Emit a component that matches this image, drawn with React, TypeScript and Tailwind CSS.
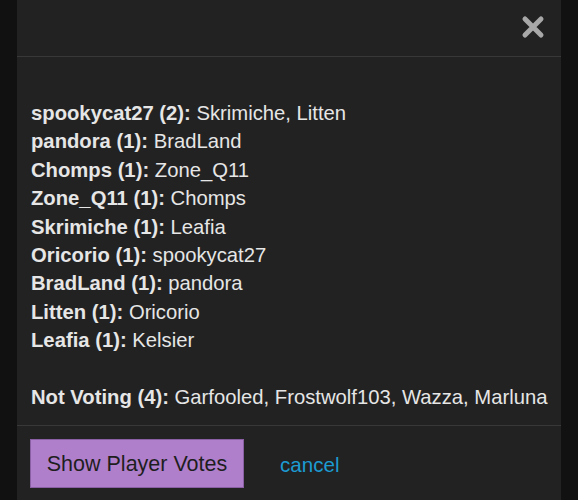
import React from "react";

const rows: [string, string][] = [
  ["spookycat27 (2):", "Skrimiche, Litten"],
  ["pandora (1):", "BradLand"],
  ["Chomps (1):", "Zone_Q11"],
  ["Zone_Q11 (1):", "Chomps"],
  ["Skrimiche (1):", "Leafia"],
  ["Oricorio (1):", "spookycat27"],
  ["BradLand (1):", "pandora"],
  ["Litten (1):", "Oricorio"],
  ["Leafia (1):", "Kelsier"],
];

export default function App() {
  return (
    <div
      className="h-[500px] w-[578px] overflow-hidden bg-[#111111] flex"
      style={{ fontFamily: '"Liberation Sans", Arial, sans-serif' }}
    >
      <div className="ml-[17px] w-[544px] h-full bg-[#222222] flex flex-col">
        <div className="h-[57px] shrink-0 border-b border-[#383838] flex items-center justify-end pr-[16px] pb-[4px]">
          <svg width="24" height="24" viewBox="0 0 24 24" className="mt-[2px]">
            <path
              d="M4 4 L20 20 M20 4 L4 20"
              stroke="#a8a8a8"
              strokeWidth="5"
              strokeLinecap="round"
              fill="none"
            />
          </svg>
        </div>
        <div className="px-[14px] pt-[42px] pb-[14px] text-[20.25px] leading-[28.4px] text-[#e6e6e6]">
          {rows.map(([a, b]) => (
            <div key={a} className="whitespace-nowrap">
              <span className="font-bold">{a}</span> {b}
            </div>
          ))}
          <div className="h-[28.4px]" />
          <div className="whitespace-nowrap">
            <span className="font-bold">Not Voting (4):</span> Garfooled, Frostwolf103, Wazza, Marluna
          </div>
        </div>
        <div className="border-t border-[#383838] flex-1 px-[13px] pt-[13px] flex items-start">
          <button
            className="h-[49px] w-[214px] bg-[#b07fcb] border border-[#8a5fa3] text-[#1e1e1e] text-[21.5px] flex items-center justify-center"
            style={{ fontFamily: '"Liberation Sans", Arial, sans-serif' }}
          >
            Show Player Votes
          </button>
          <span className="ml-[36px] mt-[11px] text-[20.6px] text-[#1c9bd3]">cancel</span>
        </div>
      </div>
    </div>
  );
}
